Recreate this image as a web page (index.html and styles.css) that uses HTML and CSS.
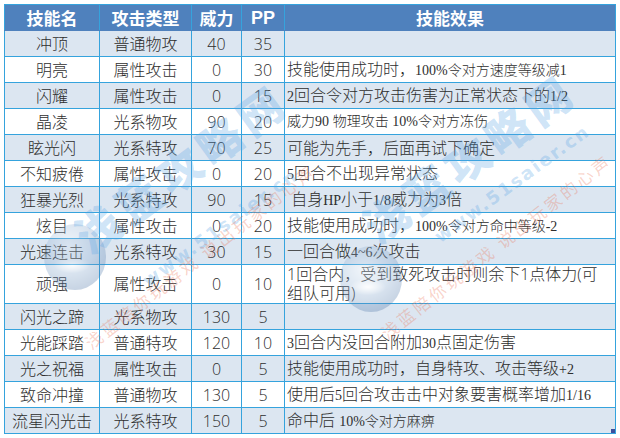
FILE: index.html
```html
<!DOCTYPE html>
<html lang="zh-CN">
<head>
<meta charset="utf-8">
<title>技能表</title>
<link rel="stylesheet" href="styles.css">
</head>
<body>
<div class="sheet">
  <table class="skills">
    <colgroup>
      <col class="c1"><col class="c2"><col class="c3"><col class="c4"><col class="c5">
    </colgroup>
    <thead>
      <tr><th>技能名</th><th>攻击类型</th><th>威力</th><th class="pp">PP</th><th>技能效果</th></tr>
    </thead>
    <tbody>
      <tr class="alt"><td>冲顶</td><td>普通物攻</td><td>40</td><td>35</td><td class="fx"></td></tr>
      <tr><td>明亮</td><td>属性攻击</td><td>0</td><td>30</td><td class="fx">技能使用成功时，<span class="s">100%</span><span class="k">令对方速度等级减</span><span class="s">1</span></td></tr>
      <tr class="alt"><td>闪耀</td><td>属性攻击</td><td>0</td><td>15</td><td class="fx"><span class="s">2</span>回合令对方攻击伤害为正常状态下的<span class="s">1/2</span></td></tr>
      <tr><td>晶凌</td><td>光系物攻</td><td>90</td><td>20</td><td class="fx sm">威力<span class="s">90</span> 物理攻击 <span class="s">10%</span>令对方冻伤</td></tr>
      <tr class="alt"><td>眩光闪</td><td>光系特攻</td><td>70</td><td>25</td><td class="fx">可能为先手，后面再试下确定</td></tr>
      <tr><td>不知疲倦</td><td>属性攻击</td><td>0</td><td>20</td><td class="fx"><span class="s">5</span>回合不出现异常状态</td></tr>
      <tr class="alt"><td>狂暴光烈</td><td>光系特攻</td><td>90</td><td>15</td><td class="fx">&nbsp;自身<span class="s">HP</span>小于<span class="s">1/8</span>威力为<span class="s">3</span>倍</td></tr>
      <tr><td>炫目</td><td>属性攻击</td><td>0</td><td>20</td><td class="fx">技能使用成功时，<span class="s">100%</span><span class="k">令对方命中等级</span><span class="s">-2</span></td></tr>
      <tr class="alt"><td>光速连击</td><td>光系特攻</td><td>30</td><td>15</td><td class="fx">一回合做<span class="s">4~6</span>次攻击</td></tr>
      <tr class="tall"><td>顽强</td><td>属性攻击</td><td>0</td><td>10</td><td class="fx">1回合内，受到致死攻击时则余下1点体力(可<br>组队可用)</td></tr>
      <tr class="alt"><td>闪光之蹄</td><td>光系物攻</td><td>130</td><td>5</td><td class="fx"></td></tr>
      <tr><td>光能踩踏</td><td>普通特攻</td><td>120</td><td>10</td><td class="fx"><span class="s">3</span>回合内没回合附加<span class="s">30</span>点固定伤害</td></tr>
      <tr class="alt"><td>光之祝福</td><td>属性攻击</td><td>0</td><td>5</td><td class="fx">技能使用成功时，自身特攻、攻击等级<span class="s">+2</span></td></tr>
      <tr><td>致命冲撞</td><td>普通物攻</td><td>130</td><td>5</td><td class="fx">使用后<span class="s">5</span>回合攻击击中对象要害概率增加<span class="s">1/16</span></td></tr>
      <tr class="alt"><td>流星闪光击</td><td>光系特攻</td><td>150</td><td>5</td><td class="fx">命中后 <span class="s">10%</span><span class="k">令对方麻痹</span></td></tr>
    </tbody>
  </table>

  <div class="ball ball1"></div>
  <div class="ball ball2"></div>
  <div class="wm-title t1">浅蓝攻略网</div>
  <div class="wm-title t2">浅蓝攻略网</div>
  <div class="wm-url u1">www.51saier.cn</div>
  <div class="wm-url u2">www.51saier.cn</div>
  <div class="wm-slogan s1">浅蓝陪你玩游戏 说出玩家的心声</div>
  <div class="wm-slogan s2">浅蓝陪你玩游戏 说出玩家的心声</div>
  <div class="corner"></div>
</div>
</body>
</html>
```

FILE: styles.css
```css
html, body {
  margin: 0;
  padding: 0;
  background: #ffffff;
}

.sheet {
  position: relative;
  width: 620px;
  height: 438px;
  overflow: hidden;
  padding: 4px 0 0 4px;
  box-sizing: border-box;
}

.skills {
  border-collapse: collapse;
  table-layout: fixed;
  width: 611px;
  font-family: "Open Sans", "Noto Sans CJK SC", sans-serif;
  font-weight: 300;
  font-size: 16px;
  color: #2e2e2e;
}

.c1 { width: 95px; }
.c2 { width: 92px; }
.c3 { width: 50px; }
.c4 { width: 43px; }
.c5 { width: 331px; }

.skills th,
.skills td {
  border: 1px solid #35a3dd;
  padding: 0;
  text-align: center;
  vertical-align: middle;
  line-height: 20px;
  white-space: nowrap;
}

.skills td { font-size: 16px; }

.skills thead tr { height: 26px; }

.skills th {
  background: #4f81bd;
  color: #ffffff;
  font-family: "Noto Sans CJK SC", sans-serif;
  font-weight: 700;
  font-size: 17px;
  border-color: #35a3dd #35a3dd #4f81bd #35a3dd;
}

.skills th.pp {
  font-family: "Liberation Sans", sans-serif;
  font-size: 18px;
}

.skills tbody tr { height: 26px; }
.skills tbody tr.tall { height: 39px; }
.skills tbody tr.alt td { background: #dce6f1; }

.skills td.fx {
  text-align: left;
  padding-left: 2px;
  white-space: nowrap;
}

.skills tr.tall td.fx { line-height: 19px; }

.skills td.sm { font-size: 14px; }

.s {
  font-family: "Liberation Serif", serif;
  font-weight: 400;
  font-size: 14px;
}

.k {
  font-size: 14px;
}

/* watermark overlays */
.ball {
  position: absolute;
  width: 62px;
  height: 66px;
  border-radius: 50%;
  pointer-events: none;
  background:
    radial-gradient(ellipse 42% 18% at 45% 62%, rgba(255,255,255,0.95), rgba(255,255,255,0) 70%),
    radial-gradient(circle at 40% 35%, #d4e3f2 0%, #86a9cf 45%, #456fa3 78%, #2c568c 100%);
  opacity: 0.3;
}
.ball1 { left: 44px; top: 224px; }
.ball2 { left: 340px; top: 246px; }

.wm-title,
.wm-url,
.wm-slogan {
  position: absolute;
  pointer-events: none;
  white-space: nowrap;
  transform-origin: left bottom;
  line-height: 1;
}

.wm-title {
  font-family: "Noto Sans CJK SC", sans-serif;
  font-weight: 900;
  font-size: 44px;
  letter-spacing: 6px;
  color: rgba(90, 165, 230, 0.3);
  transform: rotate(-36deg);
}
.t1 { left: 92px; top: 214px; }
.t2 { left: 380px; top: 204px; }

.wm-url {
  font-family: "DejaVu Sans", sans-serif;
  font-weight: 700;
  font-size: 18px;
  letter-spacing: 2px;
  color: rgba(90, 165, 230, 0.3);
  transform: rotate(-36deg);
}
.u1 { left: 150px; top: 272px; }
.u2 { left: 442px; top: 228px; }

.wm-slogan {
  font-family: "Noto Sans CJK SC", sans-serif;
  font-size: 17px;
  letter-spacing: 3px;
  color: rgba(235, 110, 80, 0.3);
  transform: rotate(-38deg);
}
.s1 { left: 92px; top: 334px; }
.s2 { left: 388px; top: 324px; }

.corner {
  position: absolute;
  left: 611px;
  top: 429px;
  width: 4px;
  height: 4px;
  background: #3c4f9c;
}
```
